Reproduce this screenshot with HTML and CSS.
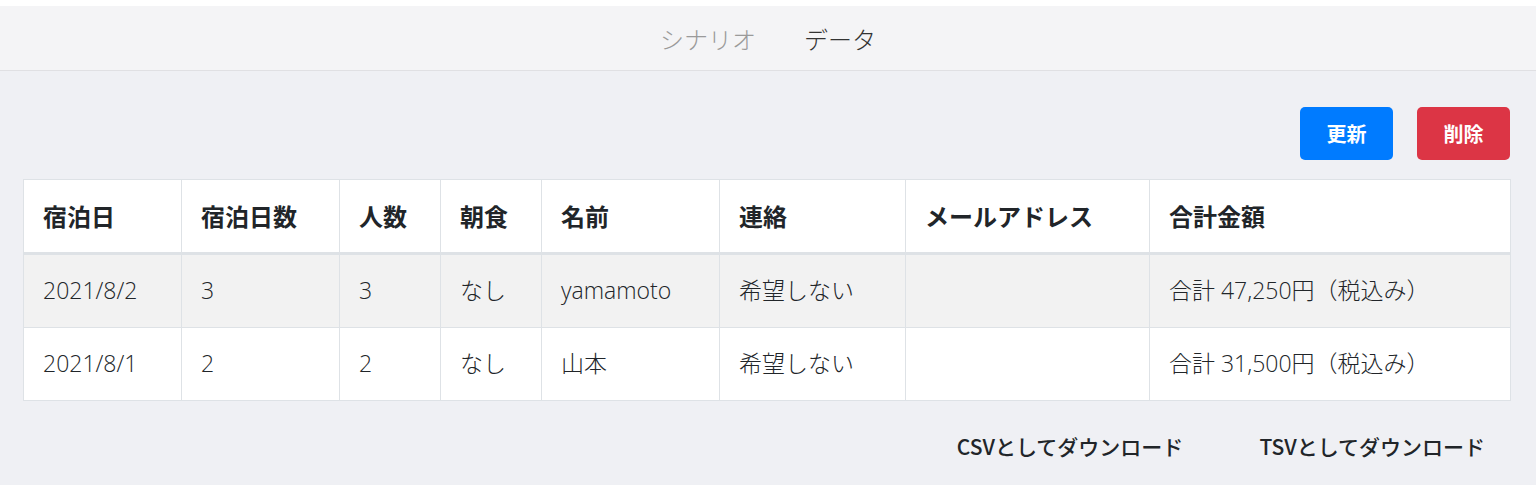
FILE: index.html
```html
<!DOCTYPE html>
<html lang="ja">
<head>
<meta charset="utf-8">
<link rel="stylesheet" href="styles.css">
</head>
<body>
<div class="top-strip"></div>
<nav class="nav">
  <a class="nav-item">シナリオ</a>
  <a class="nav-item active">データ</a>
</nav>
<main class="main">
  <div class="actions">
    <button class="btn btn-blue">更新</button>
    <button class="btn btn-red">削除</button>
  </div>
  <table class="data">
    <colgroup>
      <col class="c1"><col class="c2"><col class="c3"><col class="c4">
      <col class="c5"><col class="c6"><col class="c7"><col class="c8">
    </colgroup>
    <thead>
      <tr><th>宿泊日</th><th>宿泊日数</th><th>人数</th><th>朝食</th><th>名前</th><th>連絡</th><th>メールアドレス</th><th>合計金額</th></tr>
    </thead>
    <tbody>
      <tr class="striped"><td>2021/8/2</td><td>3</td><td>3</td><td>なし</td><td>yamamoto</td><td>希望しない</td><td></td><td>合計 47,250円（税込み）</td></tr>
      <tr><td>2021/8/1</td><td>2</td><td>2</td><td>なし</td><td>山本</td><td>希望しない</td><td></td><td>合計 31,500円（税込み）</td></tr>
    </tbody>
  </table>
  <div class="downloads">
    <a class="dl">CSVとしてダウンロード</a>
    <a class="dl">TSVとしてダウンロード</a>
  </div>
</main>
</body>
</html>
```
FILE: styles.css
```css
html, body {
  margin: 0;
  padding: 0;
  background: #ffffff;
}
body {
  font-family: "Open Sans", "Noto Sans CJK JP", sans-serif;
  color: #212529;
  height: 485px;
  overflow: hidden;
}
.top-strip {
  height: 6px;
  background: #ffffff;
}
.nav {
  height: 64px;
  background: #f4f4f6;
  border-bottom: 1px solid #e0e0e3;
  display: flex;
  justify-content: center;
  align-items: center;
  gap: 48px;
  font-family: "Noto Sans CJK JP", sans-serif;
  font-size: 24px;
  font-weight: 300;
  padding-left: 0;
}
.nav-item {
  color: #9a9a9a;
}
.nav-item.active {
  color: #333333;
}
.main {
  background: #eff0f4;
  padding: 36px 26px 0 23px;
  height: 378px;
}
.actions {
  display: flex;
  justify-content: flex-end;
  gap: 24px;
  margin-bottom: 19px;
}
.btn {
  width: 93px;
  height: 53px;
  border: none;
  border-radius: 5px;
  color: #ffffff;
  font-family: "Noto Sans CJK JP", sans-serif;
  font-weight: 700;
  font-size: 20px;
  padding: 0;
}
.btn-blue { background: #007bff; }
.btn-red { background: #dc3545; }
.data {
  width: 1487px;
  table-layout: fixed;
  border-collapse: collapse;
  background: #ffffff;
  font-size: 23px;
}
.c1 { width: 158px; }
.c2 { width: 158px; }
.c3 { width: 101px; }
.c4 { width: 101px; }
.c5 { width: 178px; }
.c6 { width: 186px; }
.c7 { width: 244px; }
.c8 { width: 361px; }
.data th, .data td {
  border: 1px solid #dee2e6;
  padding: 0 19px;
  text-align: left;
  vertical-align: middle;
  white-space: nowrap;
  line-height: 1.2;
}
.data th {
  height: 72px;
  font-family: "Noto Sans CJK JP", sans-serif;
  font-size: 24px;
  font-weight: 700;
  border-bottom: 3px solid #dee2e6;
}
.data td {
  height: 72px;
  font-weight: 300;
  color: #212529;
}
.data tr.striped td {
  background: #f2f2f2;
}
.downloads {
  display: flex;
  justify-content: flex-end;
  gap: 76px;
  padding-right: 25px;
  margin-top: 30px;
}
.dl {
  font-family: "Noto Sans CJK JP", sans-serif;
  font-size: 21px;
  font-weight: 500;
  color: #212529;
}
```
